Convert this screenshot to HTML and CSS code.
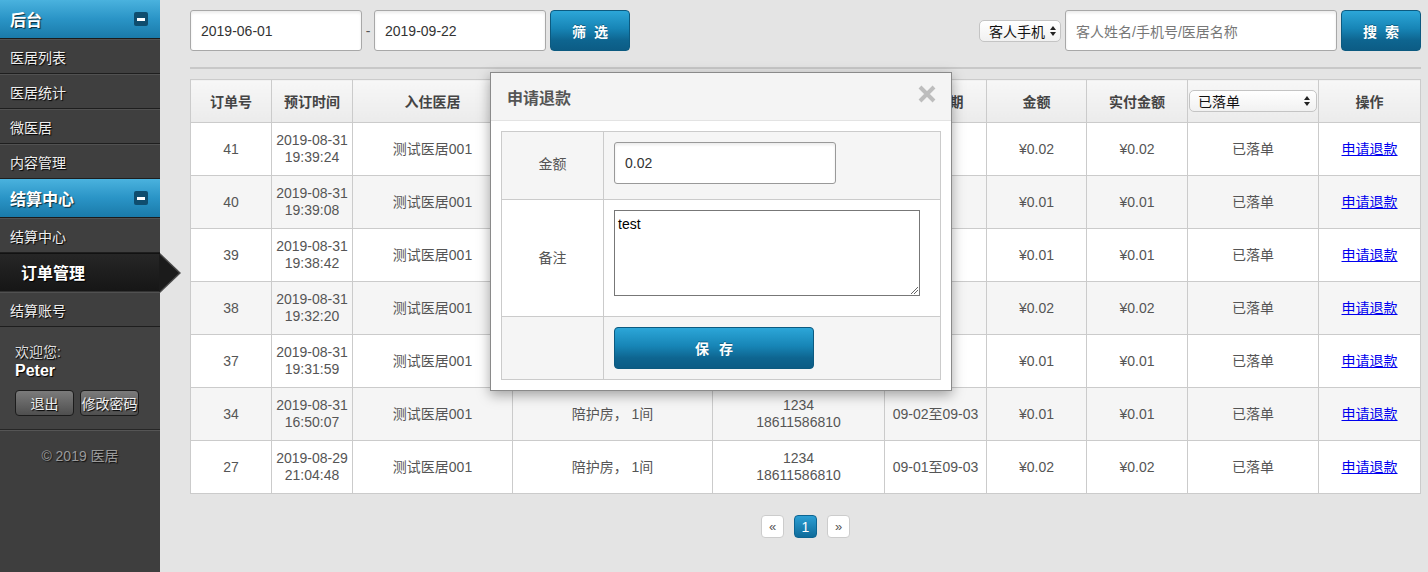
FILE: index.html
```html
<!DOCTYPE html>
<html lang="zh-CN">
<head>
<meta charset="utf-8">
<title>订单管理</title>
<link rel="stylesheet" href="styles.css">
</head>
<body>
<div class="layout">
  <aside class="sidebar">
    <div class="nav-head"><span>后台</span><span class="toggle"></span></div>
    <div class="nav-item">医居列表</div>
    <div class="nav-item">医居统计</div>
    <div class="nav-item">微医居</div>
    <div class="nav-item">内容管理</div>
    <div class="nav-head"><span>结算中心</span><span class="toggle"></span></div>
    <div class="nav-item">结算中心</div>
    <div class="nav-item active">订单管理</div>
    <div class="nav-item">结算账号</div>
    <div class="user">
      <div class="welcome">欢迎您:</div>
      <div class="uname">Peter</div>
      <div class="ubtns"><span class="ubtn">退出</span><span class="ubtn">修改密码</span></div>
    </div>
    <div class="copy">© 2019 医居</div>
  </aside>

  <main class="main">
    <div class="filter">
      <div class="fgroup">
        <div class="field date">2019-06-01</div>
        <span class="dash">-</span>
        <div class="field date">2019-09-22</div>
        <span class="btn-blue fbtn">筛 选</span>
      </div>
      <div class="fgroup">
        <span class="sel small">客人手机<svg class="arr" width="6" height="10" viewBox="0 0 6 10"><path d="M0 4 L3 0 L6 4Z M0 6 L3 10 L6 6Z" fill="#222"/></svg></span>
        <div class="field search ph">客人姓名/手机号/医居名称</div>
        <span class="btn-blue fbtn">搜 索</span>
      </div>
    </div>
    <div class="divider"></div>

    <table class="orders">
      <colgroup>
        <col style="width:81px"><col style="width:81px"><col style="width:160px"><col style="width:200px"><col style="width:172px"><col style="width:102px"><col style="width:100px"><col style="width:101px"><col style="width:131px"><col style="width:102px">
      </colgroup>
      <thead>
        <tr>
          <th>订单号</th><th>预订时间</th><th>入住医居</th><th>房型</th><th>联系人</th><th>入住日期</th><th>金额</th><th>实付金额</th>
          <th><span class="sel status">已落单<svg class="arr" width="6" height="10" viewBox="0 0 6 10"><path d="M0 4 L3 0 L6 4Z M0 6 L3 10 L6 6Z" fill="#222"/></svg></span></th>
          <th>操作</th>
        </tr>
      </thead>
      <tbody>
        <tr><td>41</td><td>2019-08-31<br>19:39:24</td><td>测试医居001</td><td>陪护房， 1间</td><td>1234<br>18611586810</td><td></td><td>¥0.02</td><td>¥0.02</td><td>已落单</td><td><a href="#">申请退款</a></td></tr>
        <tr class="alt"><td>40</td><td>2019-08-31<br>19:39:08</td><td>测试医居001</td><td>陪护房， 1间</td><td>1234<br>18611586810</td><td></td><td>¥0.01</td><td>¥0.01</td><td>已落单</td><td><a href="#">申请退款</a></td></tr>
        <tr><td>39</td><td>2019-08-31<br>19:38:42</td><td>测试医居001</td><td>陪护房， 1间</td><td>1234<br>18611586810</td><td></td><td>¥0.01</td><td>¥0.01</td><td>已落单</td><td><a href="#">申请退款</a></td></tr>
        <tr class="alt"><td>38</td><td>2019-08-31<br>19:32:20</td><td>测试医居001</td><td>陪护房， 1间</td><td>1234<br>18611586810</td><td></td><td>¥0.02</td><td>¥0.02</td><td>已落单</td><td><a href="#">申请退款</a></td></tr>
        <tr><td>37</td><td>2019-08-31<br>19:31:59</td><td>测试医居001</td><td>陪护房， 1间</td><td>1234<br>18611586810</td><td></td><td>¥0.01</td><td>¥0.01</td><td>已落单</td><td><a href="#">申请退款</a></td></tr>
        <tr class="alt"><td>34</td><td>2019-08-31<br>16:50:07</td><td>测试医居001</td><td>陪护房， 1间</td><td>1234<br>18611586810</td><td>09-02至09-03</td><td>¥0.01</td><td>¥0.01</td><td>已落单</td><td><a href="#">申请退款</a></td></tr>
        <tr><td>27</td><td>2019-08-29<br>21:04:48</td><td>测试医居001</td><td>陪护房， 1间</td><td>1234<br>18611586810</td><td>09-01至09-03</td><td>¥0.02</td><td>¥0.02</td><td>已落单</td><td><a href="#">申请退款</a></td></tr>
      </tbody>
    </table>

    <div class="pager">
      <span class="pg">«</span><span class="pg cur">1</span><span class="pg">»</span>
    </div>

    <div class="modal">
      <div class="modal-head">
        <span class="modal-title">申请退款</span>
        <svg class="close" width="18" height="18" viewBox="0 0 18 18"><path d="M2 2 L16 16 M16 2 L2 16" stroke="#bdbdbd" stroke-width="4"/></svg>
      </div>
      <div class="modal-body">
        <table class="form">
          <colgroup><col style="width:102px"><col></colgroup>
          <tr class="r1"><td class="lbl">金额</td><td><div class="field amount">0.02</div></td></tr>
          <tr class="r2"><td class="lbl">备注</td><td><div class="memo">test<svg class="grip" width="8" height="8" viewBox="0 0 8 8"><path d="M1 8 L8 1 M4 8 L8 4" stroke="#666" stroke-width="1"/></svg></div></td></tr>
          <tr class="r3"><td class="lbl"></td><td><span class="btn-blue save">保 存</span></td></tr>
        </table>
      </div>
    </div>
  </main>
</div>
</body>
</html>
```

FILE: styles.css
```css
* { box-sizing: border-box; }
body {
  margin: 0;
  width: 1428px;
  height: 572px;
  overflow: hidden;
  background: #e4e4e4;
  font-family: "Liberation Sans", "Noto Sans CJK SC", sans-serif;
  font-size: 14px;
  color: #555;
}
.layout { display: flex; height: 572px; }

/* sidebar */
.sidebar {
  width: 160px;
  flex: none;
  background: #3e3e3e;
  display: flex;
  flex-direction: column;
}
.nav-head {
  height: 39px;
  border-bottom: 1px solid #1b1b1b;
  background: linear-gradient(#4ab2de, #2a94c6 50%, #1a7aa9);
  display: flex;
  align-items: center;
  justify-content: space-between;
  padding: 0 12px 0 10px;
  color: #fff;
  font-weight: bold;
  font-size: 16px;
  text-shadow: 1px 1px 1px rgba(0,0,0,.7);
}
.toggle {
  width: 14px;
  height: 14px;
  background: #0f4d6e;
  border-radius: 2px;
  display: flex;
  align-items: center;
  justify-content: center;
}
.toggle::before { content: ""; width: 8px; height: 3px; background: #fff; }
.nav-item {
  height: 35px;
  border-top: 1px solid #515151;
  border-bottom: 1px solid #1e1e1e;
  background: #3f3f3f;
  display: flex;
  align-items: center;
  padding-left: 10px;
  color: #eee;
  text-shadow: 1px 1px 1px #000;
}
.nav-item.active {
  position: relative;
  height: 39px;
  background: linear-gradient(#262626, #161616);
  border-top: 1px solid #121212;
  border-bottom: 1px solid #333;
  padding-left: 21px;
  padding-bottom: 2px;
  font-size: 16px;
  font-weight: bold;
  color: #fff;
}
.nav-item.active::after {
  content: "";
  position: absolute;
  left: 160px;
  top: -1px;
  border-left: 21px solid #4a4a4a;
  border-top: 20px solid transparent;
  border-bottom: 20px solid transparent;
}
.nav-item.active::before {
  content: "";
  position: absolute;
  left: 159px;
  top: 0;
  z-index: 1;
  border-left: 20px solid #1b1b1b;
  border-top: 19px solid transparent;
  border-bottom: 19px solid transparent;
}
.user {
  padding: 16px 15px 13px;
  background: #424242;
  border-bottom: 1px solid #262626;
  box-shadow: 0 1px 0 #555;
  color: #ddd;
}
.welcome { line-height: 18px; text-shadow: 1px 1px 1px #000; }
.uname { line-height: 20px; font-size: 16px; font-weight: bold; color: #fff; text-shadow: 1px 1px 1px #000; }
.ubtns { margin-top: 9px; display: flex; gap: 6px; }
.ubtn {
  width: 59px;
  height: 26px;
  border: 1px solid #1c1c1c;
  border-radius: 4px;
  background: linear-gradient(#7b7b7b, #4f4f4f);
  color: #eee;
  display: flex;
  align-items: center;
  justify-content: center;
  text-shadow: 1px 1px 1px #000;
  white-space: nowrap;
}
.copy {
  padding-top: 15px;
  text-align: center;
  color: #9a9a9a;
  text-shadow: 1px 1px 1px #111;
}

/* main */
.main {
  flex: 1;
  position: relative;
  padding: 10px 8px 0 30px;
}
.filter {
  display: flex;
  justify-content: space-between;
  align-items: center;
  height: 41px;
}
.fgroup { display: flex; align-items: center; }
.field {
  height: 41px;
  border: 1px solid #a8a8a8;
  border-radius: 3px;
  background: #fff;
  box-shadow: inset 0 2px 3px rgba(0,0,0,.08);
  padding-left: 10px;
  display: flex;
  align-items: center;
  color: #333;
}
.date { width: 172px; }
.dash { width: 12px; text-align: center; color: #555; }
.search { width: 272px; margin: 0 4px 0 4px; }
.ph { color: #777; }
.btn-blue {
  display: flex;
  align-items: center;
  justify-content: center;
  border: 1px solid #0c5a80;
  border-radius: 4px;
  background: linear-gradient(#2ca6d8, #1785b6 45%, #0e6590 75%, #0c5c85);
  color: #fff;
  font-weight: bold;
  letter-spacing: 2px;
  padding-left: 2px;
  text-shadow: 0 -1px 0 rgba(0,0,0,.3);
  white-space: pre;
}
.fbtn { width: 80px; height: 41px; }
.date + .btn-blue { margin-left: 4px; }
.sel {
  display: inline-flex;
  align-items: center;
  justify-content: space-between;
  border: 1px solid #c4c4c4;
  border-radius: 5px;
  background: linear-gradient(#fff, #f1f1f1);
  color: #111;
  font-weight: normal;
}
.sel.small { width: 82px; height: 22px; padding: 0 4px 0 9px; }
.sel.status { width: 128px; height: 22px; padding: 0 6px 0 8px; margin: 0 auto; display: flex; }
.arr { flex: none; }

.divider { margin-top: 16px; height: 2px; background: #c8c8c8; }

.orders {
  margin-top: 10px;
  width: 1230px;
  table-layout: fixed;
  border-collapse: collapse;
  background: #fff;
}
.orders th, .orders td {
  border: 1px solid #cbcbcb;
  text-align: center;
  padding: 0;
}
.orders th {
  height: 43px;
  background: linear-gradient(#f7f7f7, #ebebeb);
  font-weight: bold;
  color: #444;
}
.orders td { height: 53px; line-height: 17px; color: #555; }
.orders tr.alt td { background: #f5f5f5; }
.orders a { color: #0000ee; text-decoration: underline; }

.pager {
  margin-top: 21px;
  display: flex;
  justify-content: center;
  gap: 10px;
}
.pg {
  min-width: 23px;
  height: 23px;
  padding: 0 6px;
  border: 1px solid #ccc;
  border-radius: 4px;
  background: #fff;
  color: #555;
  font-size: 13px;
  display: flex;
  align-items: center;
  justify-content: center;
}
.pg.cur {
  background: linear-gradient(#2c9fd4, #0f6b9a);
  border-color: #0d6592;
  color: #fff;
  font-size: 14px;
}

/* modal */
.modal {
  position: absolute;
  left: 330px;
  top: 72px;
  width: 462px;
  height: 319px;
  border: 1px solid #8a8a8a;
  background: #fff;
  box-shadow: 0 4px 12px rgba(0,0,0,.35);
}
.modal-head {
  height: 48px;
  background: #f4f4f4;
  border-bottom: 1px solid #e3e3e3;
  display: flex;
  align-items: center;
  justify-content: space-between;
  padding: 0 15px 0 16px;
}
.modal-title { font-size: 16px; font-weight: bold; color: #555; }
.close { margin-top: -6px; }
.modal-body { padding: 10px; }
.form {
  width: 440px;
  table-layout: fixed;
  border-collapse: collapse;
}
.form td {
  border: 1px solid #cbcbcb;
  padding: 0 0 0 10px;
}
.form td.lbl { text-align: center; padding: 0; color: #555; }
.form .r1 td { height: 68px; background: #f5f5f5; }
.form .r1 td.lbl { padding-bottom: 5px; }
.form .r2 td { height: 117px; background: #fff; }
.form .r2 td.lbl { padding-bottom: 2px; }
.form .r3 td { height: 63px; background: #f5f5f5; }
.amount { width: 222px; height: 42px; margin-top: -5px; border-color: #999; color: #333; }
.memo {
  position: relative;
  width: 306px;
  height: 86px;
  margin-top: -10px;
  border: 1px solid #777;
  background: #fff;
  padding: 5px 3px;
  color: #000;
  line-height: 16px;
}
.grip { position: absolute; right: 1px; bottom: 1px; }
.save { width: 200px; height: 42px; letter-spacing: 3px; padding-left: 3px; }
```
